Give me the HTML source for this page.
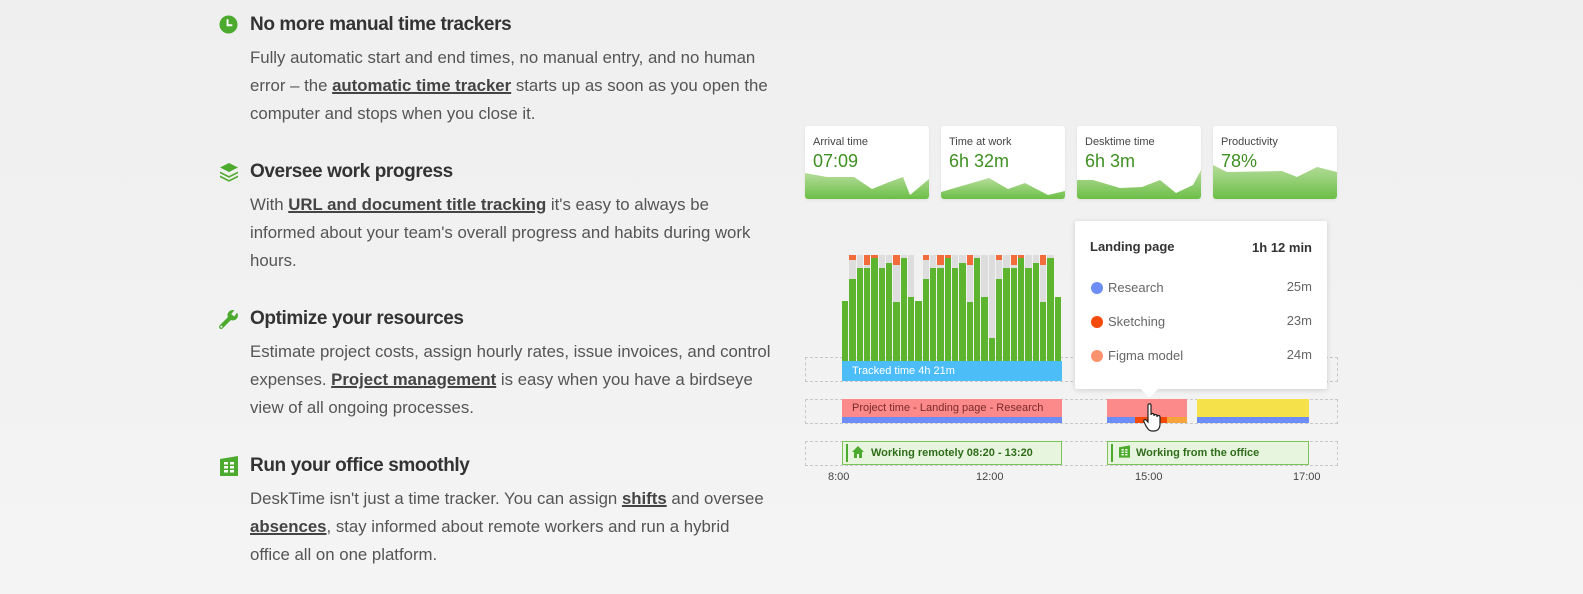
<!DOCTYPE html>
<html><head><meta charset="utf-8"><style>
*{margin:0;padding:0;box-sizing:border-box}
body{width:1583px;height:594px;overflow:hidden;position:relative;background:linear-gradient(#efefef,#f4f4f4);font-family:"Liberation Sans",sans-serif}
.a{position:absolute}
h3{position:absolute;left:250px;font-size:19px;font-weight:bold;color:#333;letter-spacing:-0.4px}
p{position:absolute;left:250px;width:560px;font-size:16.8px;line-height:28px;color:#555;letter-spacing:0px;white-space:nowrap}
p b{color:#444;text-decoration:underline;text-decoration-thickness:2px}
.card{position:absolute;top:126px;width:124px;height:73px;background:#fff;border-radius:3px;box-shadow:0 1px 3px rgba(0,0,0,.08);overflow:hidden}
.card .l{position:absolute;left:8px;top:10px;font-size:11px;color:#444}
.card .v{position:absolute;left:8px;top:25px;font-size:18px;color:#3f8f22}
.card svg{position:absolute;left:0;top:0}
.dash{position:absolute;left:805px;width:533px;height:25px;border:1px dashed #c8c8c8}
.ax{position:absolute;top:471px;font-size:11px;color:#444}
.b{position:absolute;width:6.4px}
.tt{font-size:13px;color:#666}
</style></head><body>

<svg class="a" style="left:219px;top:15px" width="19" height="19" viewBox="0 0 20 20"><circle cx="10" cy="10" r="9.5" fill="#4caa2e"/><path d="M9 4.5V10.8H14" stroke="#fff" stroke-width="2" fill="none"/></svg>
<h3 style="top:14px">No more manual time trackers</h3>
<p style="top:44px">Fully automatic start and end times, no manual entry, and no human<br>error – the <b>automatic time tracker</b> starts up as soon as you open the<br>computer and stops when you close it.</p>

<svg class="a" style="left:219px;top:162px" width="20" height="20" viewBox="0 0 20 20" fill="#4caa2e"><path d="M10 1L19 5.5 10 10 1 5.5Z"/><path d="M1 9.5L10 14 19 9.5 19 11.2 10 15.7 1 11.2Z"/><path d="M1 13.5L10 18 19 13.5 19 15.2 10 19.7 1 15.2Z"/></svg>
<h3 style="top:161px">Oversee work progress</h3>
<p style="top:191px">With <b>URL and document title tracking</b> it's easy to always be<br>informed about your team's overall progress and habits during work<br>hours.</p>

<svg class="a" style="left:218px;top:309px" width="21" height="21" viewBox="0 0 20 20"><path d="M3 17L11 9" stroke="#4caa2e" stroke-width="4" stroke-linecap="round"/><circle cx="14" cy="6" r="5" fill="#4caa2e"/><path d="M14 6L18 1" stroke="#f1f1f1" stroke-width="3.5"/><circle cx="3.2" cy="16.8" r="1" fill="#fff"/></svg>
<h3 style="top:308px">Optimize your resources</h3>
<p style="top:338px">Estimate project costs, assign hourly rates, issue invoices, and control<br>expenses. <b>Project management</b> is easy when you have a birdseye<br>view of all ongoing processes.</p>

<svg class="a" style="left:220px;top:456px" width="18" height="20" viewBox="0 0 18 20"><path d="M0 3L18 0V20H0Z" fill="#4caa2e"/><g fill="#fff"><rect x="4" y="6" width="4" height="2.5"/><rect x="10" y="6" width="4" height="2.5"/><rect x="4" y="10" width="4" height="2.5"/><rect x="10" y="10" width="4" height="2.5"/><rect x="4" y="14" width="4" height="2.5"/><rect x="10" y="14" width="4" height="2.5"/></g></svg>
<h3 style="top:455px">Run your office smoothly</h3>
<p style="top:485px">DeskTime isn't just a time tracker. You can assign <b>shifts</b> and oversee<br><b>absences</b>, stay informed about remote workers and run a hybrid<br>office all on one platform.</p>

<svg width="0" height="0" style="position:absolute"><defs><linearGradient id="g" x1="0" y1="0" x2="0" y2="1"><stop offset="0" stop-color="#b5dc9a"/><stop offset="1" stop-color="#6cbf47"/></linearGradient></defs></svg>
<div class="card" style="left:805px"><svg width="124" height="73"><path d="M0 47L22 51H49L67 63 87 55 98 51 105 69 124 53V73H0Z" fill="url(#g)"/></svg><div class="l">Arrival time</div><div class="v">07:09</div></div>
<div class="card" style="left:941px"><svg width="124" height="73"><path d="M0 66L48 52 67 63 84 57 107 69 124 65V73H0Z" fill="url(#g)"/></svg><div class="l">Time at work</div><div class="v">6h 32m</div></div>
<div class="card" style="left:1077px"><svg width="124" height="73"><path d="M0 54H16L43 62 65 61 83 54 99 67 116 59 124 44V73H0Z" fill="url(#g)"/></svg><div class="l">Desktime time</div><div class="v">6h 3m</div></div>
<div class="card" style="left:1213px"><svg width="124" height="73"><path d="M0 39L14 46 69 45 84 51 104 41 124 46V73H0Z" fill="url(#g)"/></svg><div class="l">Productivity</div><div class="v">78%</div></div>

<div class="dash" style="top:357px"></div>
<div class="dash" style="top:399px"></div>
<div class="dash" style="top:441px"></div>

<div class="a" style="left:842px;top:255px">
<div class="b" style="left:0px;top:46px;height:60px;background:#5db52f"></div>
<div class="b" style="left:7.33px;top:0;height:106px;background:linear-gradient(#f26b3a 0 5px,#ddd 5px 24px,#5db52f 24px)"></div>
<div class="b" style="left:14.66px;top:0;height:106px;background:linear-gradient(#ddd 0 13px,#5db52f 13px)"></div>
<div class="b" style="left:22px;top:0;height:106px;background:linear-gradient(#f26b3a 0 10px,#ddd 10px 13px,#5db52f 13px)"></div>
<div class="b" style="left:29.3px;top:0;height:106px;background:linear-gradient(#f26b3a 0 3px,#5db52f 3px)"></div>
<div class="b" style="left:36.6px;top:0;height:106px;background:linear-gradient(#ddd 0 13px,#5db52f 13px)"></div>
<div class="b" style="left:44px;top:0;height:106px;background:linear-gradient(#ddd 0 8px,#5db52f 8px)"></div>
<div class="b" style="left:51.3px;top:0;height:106px;background:linear-gradient(#f26b3a 0 10px,#ddd 10px 47px,#5db52f 47px)"></div>
<div class="b" style="left:58.6px;top:0;height:106px;background:linear-gradient(#ddd 0 3px,#5db52f 3px)"></div>
<div class="b" style="left:66px;top:0;height:106px;background:linear-gradient(#ddd 0 42px,#5db52f 42px)"></div>
<div class="b" style="left:73.3px;top:46px;height:60px;background:#5db52f"></div>
<div class="b" style="left:80.6px;top:0;height:106px;background:linear-gradient(#f26b3a 0 5px,#ddd 5px 24px,#5db52f 24px)"></div>
<div class="b" style="left:88px;top:0;height:106px;background:linear-gradient(#ddd 0 13px,#5db52f 13px)"></div>
<div class="b" style="left:95.3px;top:0;height:106px;background:linear-gradient(#f26b3a 0 10px,#ddd 10px 13px,#5db52f 13px)"></div>
<div class="b" style="left:102.6px;top:0;height:106px;background:linear-gradient(#f26b3a 0 3px,#5db52f 3px)"></div>
<div class="b" style="left:110px;top:0;height:106px;background:linear-gradient(#ddd 0 13px,#5db52f 13px)"></div>
<div class="b" style="left:117.3px;top:0;height:106px;background:linear-gradient(#ddd 0 8px,#5db52f 8px)"></div>
<div class="b" style="left:124.6px;top:0;height:106px;background:linear-gradient(#f26b3a 0 10px,#ddd 10px 47px,#5db52f 47px)"></div>
<div class="b" style="left:132px;top:0;height:106px;background:linear-gradient(#ddd 0 3px,#5db52f 3px)"></div>
<div class="b" style="left:139.3px;top:0;height:106px;background:linear-gradient(#ddd 0 42px,#5db52f 42px)"></div>
<div class="b" style="left:146.6px;top:0;height:106px;background:linear-gradient(#ddd 0 83px,#5db52f 83px)"></div>
<div class="b" style="left:154px;top:0;height:106px;background:linear-gradient(#f26b3a 0 5px,#ddd 5px 24px,#5db52f 24px)"></div>
<div class="b" style="left:161.3px;top:0;height:106px;background:linear-gradient(#ddd 0 13px,#5db52f 13px)"></div>
<div class="b" style="left:168.6px;top:0;height:106px;background:linear-gradient(#f26b3a 0 10px,#ddd 10px 13px,#5db52f 13px)"></div>
<div class="b" style="left:176px;top:0;height:106px;background:linear-gradient(#f26b3a 0 3px,#5db52f 3px)"></div>
<div class="b" style="left:183.3px;top:0;height:106px;background:linear-gradient(#ddd 0 13px,#5db52f 13px)"></div>
<div class="b" style="left:190.6px;top:0;height:106px;background:linear-gradient(#ddd 0 8px,#5db52f 8px)"></div>
<div class="b" style="left:198px;top:0;height:106px;background:linear-gradient(#f26b3a 0 10px,#ddd 10px 47px,#5db52f 47px)"></div>
<div class="b" style="left:205.3px;top:0;height:106px;background:linear-gradient(#ddd 0 3px,#5db52f 3px)"></div>
<div class="b" style="left:212.6px;top:42px;height:64px;background:#5db52f"></div>
</div>

<div class="a" style="left:842px;top:361px;width:220px;height:20px;background:#4dbdf7;color:#fff;font-size:11px;line-height:20px;padding-left:10px">Tracked time 4h 21m</div>

<div class="a" style="left:842px;top:399px;width:220px;height:24px;background:linear-gradient(#fc8a8a 0 18px,#6b8df5 18px);color:#7a2a2a;font-size:11px;line-height:19px;padding-left:10px">Project time - Landing page - Research</div>
<div class="a" style="left:1107px;top:399px;width:80px;height:24px;background:linear-gradient(#fc8a8a 0 18px,transparent 18px)"></div>
<div class="a" style="left:1107px;top:417px;width:28px;height:6px;background:#6b8df5"></div>
<div class="a" style="left:1135px;top:417px;width:32px;height:6px;background:#f54a0a"></div>
<div class="a" style="left:1167px;top:417px;width:20px;height:6px;background:#f5a33a"></div>
<div class="a" style="left:1197px;top:399px;width:112px;height:24px;background:linear-gradient(#f5e14a 0 18px,#6b8df5 18px)"></div>

<div class="a" style="left:842px;top:441px;width:220px;height:24px;background:#e8f5de;border:1px solid #7cc45a;font-size:11px;font-weight:bold;color:#2f6d1a;line-height:22px;padding-left:28px">Working remotely 08:20 - 13:20</div>
<div class="a" style="left:846px;top:444px;width:2px;height:18px;background:#4caa2e"></div>
<svg class="a" style="left:852px;top:446px" width="12" height="12" viewBox="0 0 12 12" fill="#4caa2e"><path d="M6 0L12 6H10V12H7V8H5V12H2V6H0Z"/></svg>
<div class="a" style="left:1107px;top:441px;width:202px;height:24px;background:#e8f5de;border:1px solid #7cc45a;font-size:11px;font-weight:bold;color:#2f6d1a;line-height:22px;padding-left:28px">Working from the office</div>
<div class="a" style="left:1111px;top:444px;width:2px;height:18px;background:#4caa2e"></div>
<svg class="a" style="left:1119px;top:445px" width="11" height="13" viewBox="0 0 18 20"><path d="M0 3L18 0V20H0Z" fill="#4caa2e"/><g fill="#e8f5de"><rect x="4" y="6" width="4" height="2.5"/><rect x="10" y="6" width="4" height="2.5"/><rect x="4" y="10" width="4" height="2.5"/><rect x="10" y="10" width="4" height="2.5"/><rect x="4" y="14" width="4" height="2.5"/><rect x="10" y="14" width="4" height="2.5"/></g></svg>

<div class="ax" style="left:828px">8:00</div>
<div class="ax" style="left:976px">12:00</div>
<div class="ax" style="left:1135px">15:00</div>
<div class="ax" style="left:1293px">17:00</div>

<div class="a" style="left:1075px;top:221px;width:252px;height:168px;background:#fff;border-radius:2px;box-shadow:0 1px 6px rgba(0,0,0,.15)">
<div class="a" style="left:15px;top:18px;font-size:13px;font-weight:bold;color:#333">Landing page</div>
<div class="a" style="right:15px;top:19px;font-size:13px;font-weight:bold;color:#333">1h 12 min</div>
<div class="a" style="left:16px;top:61px;width:12px;height:12px;border-radius:50%;background:#6b8df5"></div>
<div class="a tt" style="left:33px;top:59px">Research</div><div class="a tt" style="right:15px;top:58px">25m</div>
<div class="a" style="left:16px;top:95px;width:12px;height:12px;border-radius:50%;background:#f54a0a"></div>
<div class="a tt" style="left:33px;top:93px">Sketching</div><div class="a tt" style="right:15px;top:92px">23m</div>
<div class="a" style="left:16px;top:129px;width:12px;height:12px;border-radius:50%;background:#fa9270"></div>
<div class="a tt" style="left:33px;top:127px">Figma model</div><div class="a tt" style="right:15px;top:126px">24m</div>
<div class="a" style="left:68px;top:161px;width:13px;height:13px;background:#fff;transform:rotate(45deg)"></div>
</div>

<svg class="a" style="left:1143px;top:403px" width="22" height="30" viewBox="0 0 22 30"><path d="M5 2C5 0.5 8 0.5 8 2V12C8 10 11 10 11 12V13C11 11 14 11 14 13V14C14 12 17 12 17 14V21C17 25 15 28 11 28H9C6 28 5 26 3 23L1 19C0 17 2 16 3 17L5 19Z" fill="#fff" stroke="#222" stroke-width="1.2"/></svg>
</body></html>
